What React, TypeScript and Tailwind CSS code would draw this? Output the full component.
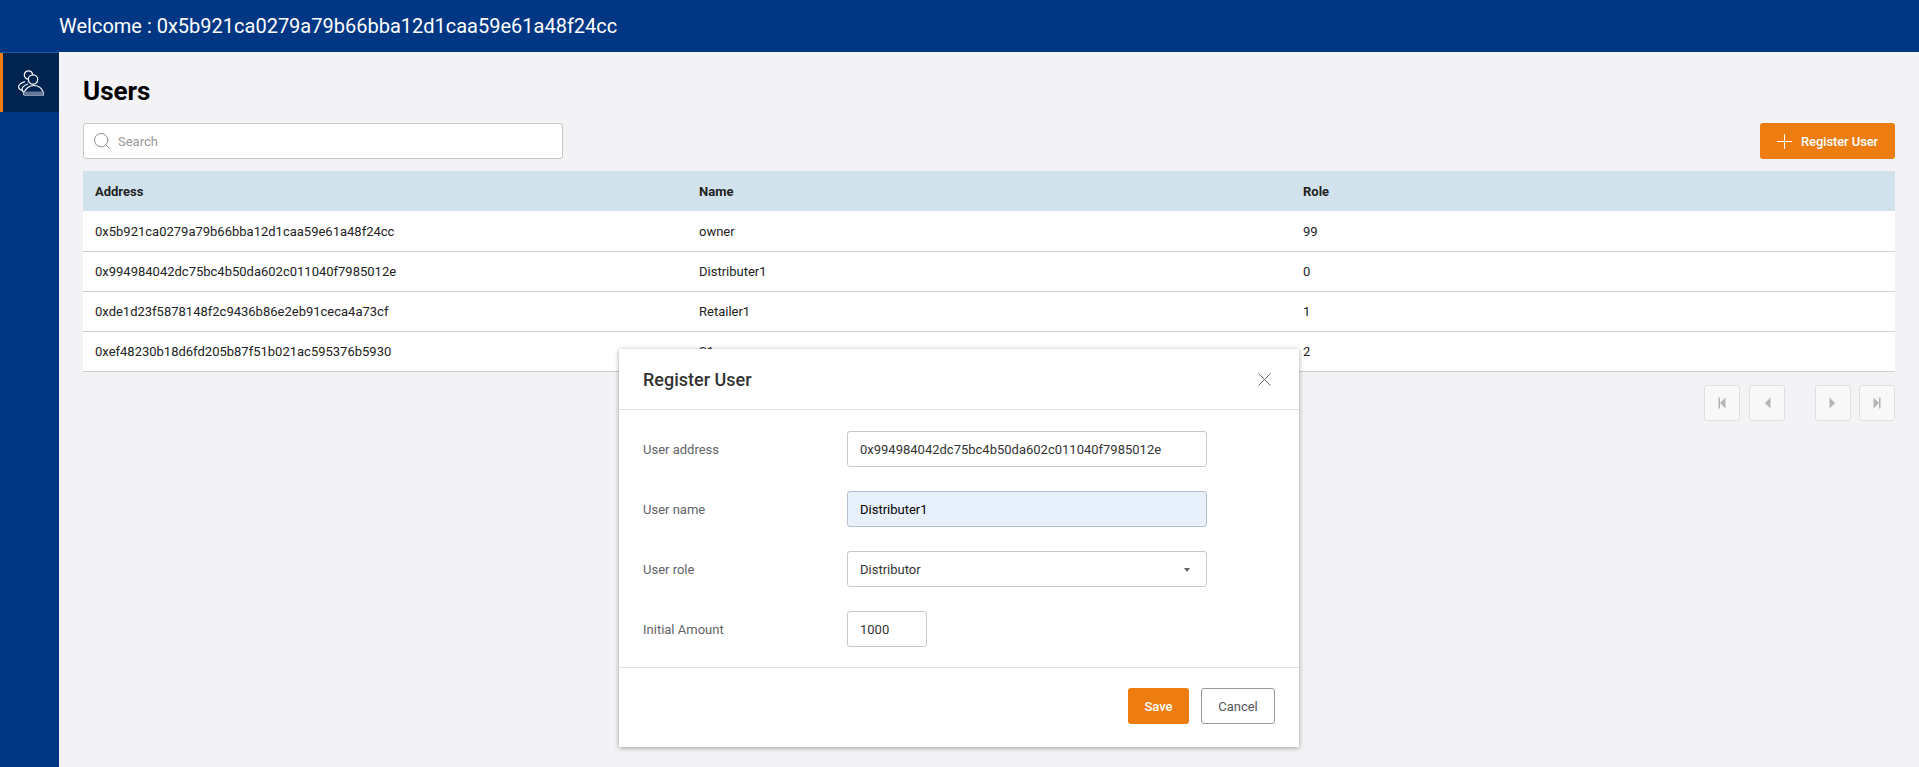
import { Search } from "lucide-react";

const USERS = [
  { address: "0x5b921ca0279a79b66bba12d1caa59e61a48f24cc", name: "owner", role: "99" },
  { address: "0x994984042dc75bc4b50da602c011040f7985012e", name: "Distributer1", role: "0" },
  { address: "0xde1d23f5878148f2c9436b86e2eb91ceca4a73cf", name: "Retailer1", role: "1" },
  { address: "0xef48230b18d6fd205b87f51b021ac595376b5930", name: "S1", role: "2" },
];

function UsersIcon() {
  return (
    <svg width="26" height="26" viewBox="0 0 26 26" fill="none" stroke="white" strokeWidth="1.2">
      <circle cx="10.500" cy="5" r="4.200" />
      <circle cx="15" cy="9.500" r="4.700" fill="#00234f" />
      <path d="M7 11.500C3 13 .6 15 .6 17c0 1.800 2 3 4.400 3.500" />
      <path d="M10 14c-3 1-6 3-6 5.500 0 1.500 1 2.500 3 3" />
      <path d="M6.500 25c-.8 0-1-.6-.7-1.300C7 19 11 15.500 16 15.500s8.500 3.500 9.700 8.200c.2.700-.1 1.300-.8 1.300z" fill="#00234f" />
      <path d="M6.500 21.500h18.500l.6 2.800-.8.600H6.300l-.5-.800z" fill="#66799c" stroke="none" />
    </svg>
  );
}

function PageButton({ dir, bar }: { dir: "left" | "right"; bar?: boolean }) {
  return (
    <button className="flex h-9 w-9 items-center justify-center rounded-[3px] border border-[#dfdfe2] bg-[#f8f8f9]">
      <svg width="10" height="12" viewBox="0 0 10 12" fill="#b3b3b3">
        {dir === "left" ? (
          <>
            {bar && <rect x="1.500" y="0.500" width="1.500" height="11" />}
            <path d="M8.500 .5v11L3 6z" />
          </>
        ) : (
          <>
            <path d="M1.500 .5v11L7 6z" />
            {bar && <rect x="7" y="0.500" width="1.500" height="11" />}
          </>
        )}
      </svg>
    </button>
  );
}

function Field({ label, children }: { label: string; children: React.ReactNode }) {
  return (
    <div className="flex h-9 items-center">
      <label className="w-[204px] pt-px text-[13px] text-[#5f6368]">{label}</label>
      {children}
    </div>
  );
}

export default function App() {
  return (
    <div className="relative flex h-screen flex-col overflow-hidden bg-[#f3f3f6] font-['Roboto',sans-serif]">
      <header className="flex h-[52px] shrink-0 items-center bg-[#003784] pl-[59px] text-[20px] text-white">
        Welcome : 0x5b921ca0279a79b66bba12d1caa59e61a48f24cc
      </header>

      <div className="flex min-h-0 flex-1">
        {/* 侧边栏 */}
        <aside className="w-[59px] shrink-0 border-t border-[#0b5aa8] bg-[#003784]">
          <div className="flex h-[59px] items-start justify-center border-l-[3px] border-[#ee7d11] bg-[#00234f] pt-[17px]">
            <UsersIcon />
          </div>
        </aside>

        <main className="flex-1 pl-6 pr-6">
          <h1 className="mt-6 text-[26px] leading-[30px] font-bold text-black">Users</h1>

          <div className="mt-[17px] flex items-center justify-between">
            <div className="flex h-9 w-[480px] items-center rounded-[3px] border border-[#c8c8c8] bg-white pl-2">
              <Search size={20} strokeWidth={1} className="text-[#777]" />
              <span className="ml-[6px] pt-px text-[13px] text-[#999]">Search</span>
            </div>
            <button className="flex h-9 w-[135px] items-center gap-[9px] rounded-[3px] bg-[#ee7d11] pl-[17px] text-[13px] text-white">
              <svg width="15" height="15" viewBox="0 0 15 15" stroke="white" strokeWidth="1">
                <path d="M7.500 0v15M0 7.500h15" />
              </svg>
              <span className="pt-px font-medium tracking-[-0.1px]">Register User</span>
            </button>
          </div>

          <table className="mt-3 w-full table-fixed text-left text-[13px] text-[#222]">
            <thead>
              <tr className="h-10 bg-[#d2e2ec]">
                <th className="px-3 pt-[2px] font-bold">Address</th>
                <th className="px-3 pt-[2px] font-bold">Name</th>
                <th className="px-3 pt-[2px] font-bold">Role</th>
              </tr>
            </thead>
            <tbody>
              {USERS.map((u) => (
                <tr key={u.address} className="h-10 border-b border-[#cfcfd4] bg-white">
                  <td className="px-3 pt-[2px]">{u.address}</td>
                  <td className="px-3 pt-[2px]">{u.name}</td>
                  <td className="px-3 pt-[2px]">{u.role}</td>
                </tr>
              ))}
            </tbody>
          </table>

          <div className="mt-[13px] flex justify-end">
            <PageButton dir="left" bar />
            <div className="ml-[9px]">
              <PageButton dir="left" />
            </div>
            <div className="ml-[30px]">
              <PageButton dir="right" />
            </div>
            <div className="ml-2">
              <PageButton dir="right" bar />
            </div>
          </div>
        </main>
      </div>

      {/* 弹窗 */}
      <div className="absolute top-[349px] left-[619px] w-[680px] bg-white shadow-[0_1px_5px_rgba(0,0,0,0.35)]">
        <div className="flex h-[61px] items-center justify-between border-b border-[#e2e2e2] pr-7 pl-6">
          <span className="text-[18px] font-medium text-[#333]">Register User</span>
          <svg width="13" height="13" viewBox="0 0 13 13" stroke="#666" strokeWidth="1">
            <path d="M.5.5l12 12M12.500.5l-12 12" />
          </svg>
        </div>

        <div className="flex flex-col gap-6 border-b border-[#e2e2e2] px-6 pt-[21px] pb-5">
          <Field label="User address">
            <input
              readOnly
              value="0x994984042dc75bc4b50da602c011040f7985012e"
              className="h-9 w-[360px] rounded-[3px] border border-[#c8c8c8] px-3 pt-px text-[13px] text-[#333]"
            />
          </Field>
          <Field label="User name">
            <input
              readOnly
              value="Distributer1"
              className="h-9 w-[360px] rounded-[3px] border border-[#b4bfd0] bg-[#e8f0fc] px-3 pt-px text-[13px] text-black"
            />
          </Field>
          <Field label="User role">
            <div className="flex h-9 w-[360px] items-center justify-between rounded-[3px] border border-[#c8c8c8] px-3 pt-px text-[13px] text-[#333]">
              Distributor
              <span className="mr-1 h-0 w-0 border-x-[3.500px] border-t-[4px] border-x-transparent border-t-[#666]" />
            </div>
          </Field>
          <Field label="Initial Amount">
            <input
              readOnly
              value="1000"
              className="h-9 w-20 rounded-[3px] border border-[#c8c8c8] px-3 pt-px text-[13px] text-[#333]"
            />
          </Field>
        </div>

        <div className="flex h-[79px] justify-end gap-3 pt-5 pr-6">
          <button className="h-9 w-[61px] rounded-[3px] bg-[#ee7d11] pt-px text-[13px] font-medium text-white">Save</button>
          <button className="h-9 w-[74px] rounded-[3px] border border-[#999] pt-px text-[13px] text-[#555]">Cancel</button>
        </div>
      </div>
    </div>
  );
}
